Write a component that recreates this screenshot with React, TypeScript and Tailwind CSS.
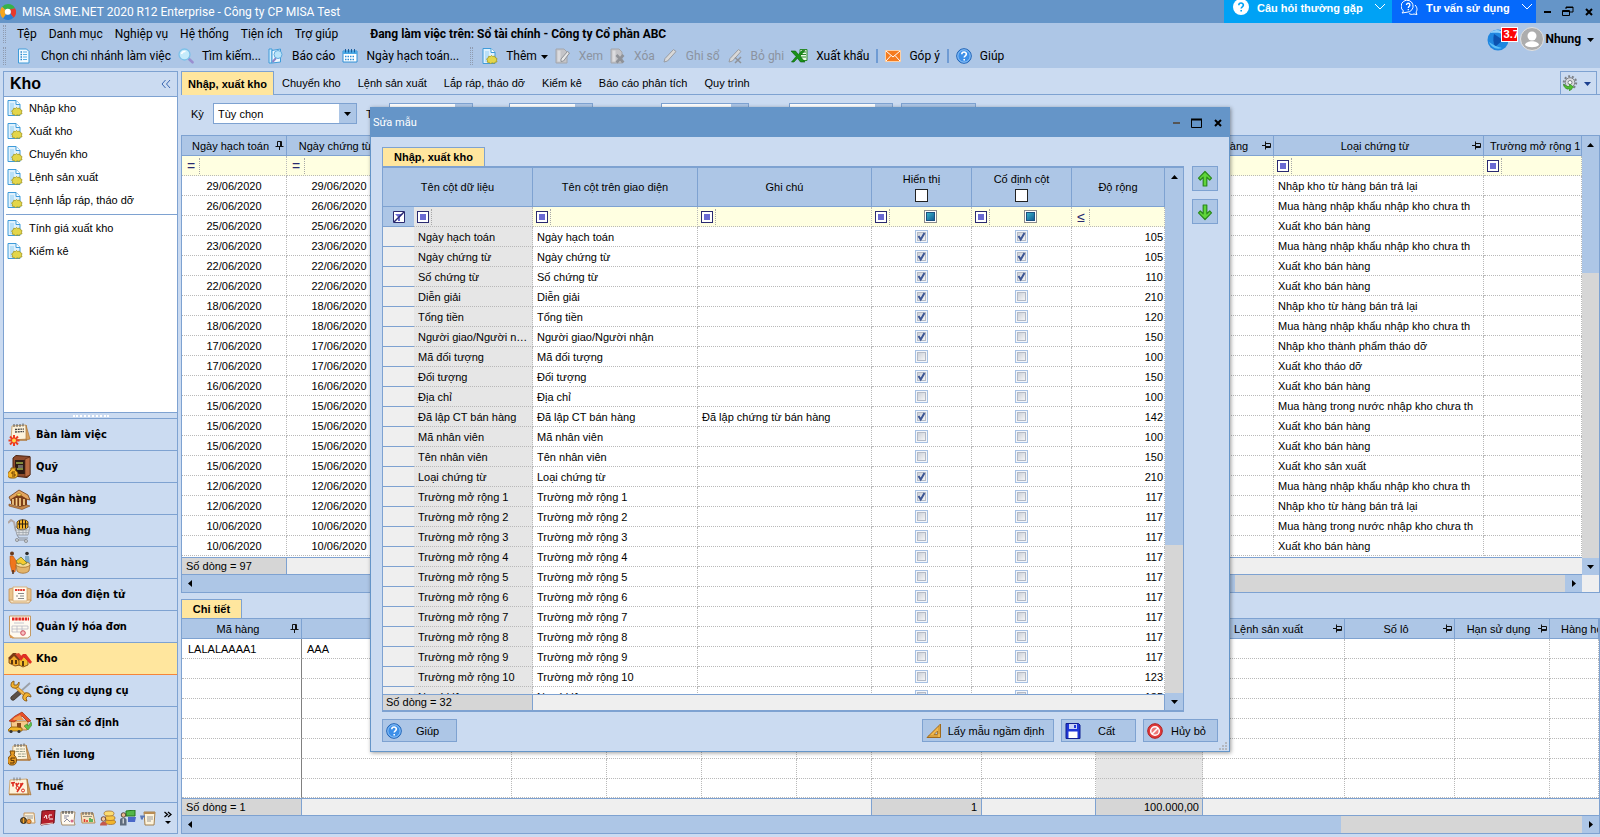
import type { ReactNode } from "react";

const ui = "font-['Roboto','Liberation_Sans',sans-serif]";

const menus = ["Tệp", "Danh mục", "Nghiệp vụ", "Hệ thống", "Tiện ích", "Trợ giúp"];
const tabs = ["Chuyển kho", "Lệnh sản xuất", "Lắp ráp, tháo dỡ", "Kiểm kê", "Báo cáo phân tích", "Quy trình"];
const links = ["Nhập kho", "Xuất kho", "Chuyển kho", "Lệnh sản xuất", "Lệnh lắp ráp, tháo dỡ"];
const extraLinks = ["Tính giá xuất kho", "Kiểm kê"];

const vouchers: [string, string][] = [
  ["29/06/2020", "Nhập kho từ hàng bán trả lại"],
  ["26/06/2020", "Mua hàng nhập khẩu nhập kho chưa th"],
  ["25/06/2020", "Xuất kho bán hàng"],
  ["23/06/2020", "Mua hàng nhập khẩu nhập kho chưa th"],
  ["22/06/2020", "Xuất kho bán hàng"],
  ["22/06/2020", "Xuất kho bán hàng"],
  ["18/06/2020", "Nhập kho từ hàng bán trả lại"],
  ["18/06/2020", "Mua hàng nhập khẩu nhập kho chưa th"],
  ["17/06/2020", "Nhập kho thành phẩm tháo dỡ"],
  ["17/06/2020", "Xuất kho tháo dỡ"],
  ["16/06/2020", "Xuất kho bán hàng"],
  ["15/06/2020", "Mua hàng trong nước nhập kho chưa th"],
  ["15/06/2020", "Xuất kho bán hàng"],
  ["15/06/2020", "Xuất kho bán hàng"],
  ["15/06/2020", "Xuất kho sản xuất"],
  ["12/06/2020", "Mua hàng nhập khẩu nhập kho chưa th"],
  ["12/06/2020", "Nhập kho từ hàng bán trả lại"],
  ["10/06/2020", "Mua hàng trong nước nhập kho chưa th"],
  ["10/06/2020", "Xuất kho bán hàng"],
];

type Field = { name: string; note?: string; show?: boolean; fixed?: boolean; width: number };

const fields: Field[] = [
  { name: "Ngày hạch toán", show: true, fixed: true, width: 105 },
  { name: "Ngày chứng từ", show: true, fixed: true, width: 105 },
  { name: "Số chứng từ", show: true, fixed: true, width: 110 },
  { name: "Diễn giải", show: true, width: 210 },
  { name: "Tổng tiền", show: true, width: 120 },
  { name: "Người giao/Người nhận", show: true, width: 150 },
  { name: "Mã đối tượng", width: 100 },
  { name: "Đối tượng", show: true, width: 150 },
  { name: "Địa chỉ", width: 100 },
  { name: "Đã lập CT bán hàng", note: "Đã lập chứng từ bán hàng", show: true, width: 142 },
  { name: "Mã nhân viên", width: 100 },
  { name: "Tên nhân viên", width: 150 },
  { name: "Loại chứng từ", show: true, width: 210 },
  { name: "Trường mở rộng 1", show: true, width: 117 },
  { name: "Trường mở rộng 2", width: 117 },
  { name: "Trường mở rộng 3", width: 117 },
  { name: "Trường mở rộng 4", width: 117 },
  { name: "Trường mở rộng 5", width: 117 },
  { name: "Trường mở rộng 6", width: 117 },
  { name: "Trường mở rộng 7", width: 117 },
  { name: "Trường mở rộng 8", width: 117 },
  { name: "Trường mở rộng 9", width: 117 },
  { name: "Trường mở rộng 10", width: 123 },
  { name: "Người lập", width: 135 },
];

/* ---------- icons ---------- */

function Logo() {
  return (
    <svg width="16" height="16" viewBox="0 0 16 16" className="shrink-0">
      <path d="M8 0a8 8 0 0 1 7 4.2L9.6 5.4A3 3 0 0 0 5.500 6L2 2.800A8 8 0 0 1 8 0z" fill="#35b34a" />
      <path d="M15 4.200A8 8 0 0 1 13.500 13.800L10.500 9.800A3 3 0 0 0 9.600 5.400z" fill="#e8392c" />
      <path d="M13.500 13.800A8 8 0 0 1 3 14.200L6 10.200a3 3 0 0 0 4.500-.4z" fill="#2d7dd2" />
      <path d="M3 14.200A8 8 0 0 1 2 2.800L5.500 6A3 3 0 0 0 6 10.200z" fill="#f7a51c" />
      <circle cx="7.800" cy="7.800" r="3" fill="#fff" />
    </svg>
  );
}

function DocIcon() {
  return (
    <svg width="16" height="16" viewBox="0 0 16 16" className="shrink-0">
      <path d="M1 .5h8l4 4v11H1z" fill="#dff1fd" stroke="#3f9bd9" />
      <path d="M3 14V3h4v11z" fill="#b9e0f8" />
      <path d="M9 .5v4h4" fill="#fff" stroke="#3f9bd9" />
      <path d="M9.500 7.500l1.200 1 1.800-.4.800 1.500 1.700.9-.5 1.700.5 1.600-1.700.4-1.300 1.200-1.700-.6-1.800.9-1.300-1.200-1.900-.3.200-1.700-.9-1.600 1.600-1 .5-1.600 1.700.2z" fill="#e3d64a" stroke="#a09420" strokeWidth=".8" />
    </svg>
  );
}

function ListIcon() {
  return (
    <svg width="16" height="16" viewBox="0 0 16 16" className="shrink-0">
      <path d="M1.500 1h8l2.500 2.500V15H1.500z" fill="#f3faff" stroke="#3f9bd9" />
      <path d="M3.500 4h1.500M3.500 6.500h1.500M3.500 9h1.500M3.500 11.500h1.500" stroke="#2b86c9" strokeWidth="1.400" />
      <path d="M6 4h4M6 6.500h4M6 9h4M6 11.500h4" stroke="#5aaee3" />
    </svg>
  );
}

function SearchIcon() {
  return (
    <svg width="16" height="16" viewBox="0 0 16 16" className="shrink-0">
      <path d="M10.500 10.500l4 3.800" stroke="#9a8fd0" strokeWidth="2.600" strokeLinecap="round" />
      <circle cx="6.500" cy="6.500" r="5.500" fill="#c5ebfb" stroke="#7cc0e8" strokeWidth="1.300" />
      <path d="M3.500 6a3.500 3.500 0 0 1 4-2.500" stroke="#fff" strokeWidth="1.500" fill="none" />
    </svg>
  );
}

function ReportIcon() {
  return (
    <svg width="16" height="16" viewBox="0 0 16 16" className="shrink-0">
      <path d="M1 1h3v14H1z" fill="#d3edfc" stroke="#3f9bd9" />
      <path d="M4 2.500l8.500-1.500v13L4 15z" fill="#f1f9ff" stroke="#3f9bd9" />
      <path d="M8 10l-3.500 4" stroke="#8d86c9" strokeWidth="2" />
      <circle cx="10" cy="6.500" r="4" fill="#b9e4fa" stroke="#5fa9dd" />
    </svg>
  );
}

function CalendarIcon() {
  return (
    <svg width="16" height="16" viewBox="0 0 16 16" className="shrink-0">
      <path d="M1 3h14v11H1z" fill="#fff" stroke="#2f8fd6" />
      <path d="M1 3h14v3H1z" fill="#4aa9e6" />
      <path d="M3.500 1v3.500M6.500 1v3.500M9.500 1v3.500M12.500 1v3.500" stroke="#1a5f9c" />
      <path d="M3 8.500h10M3 11.500h10" stroke="#2f8fd6" strokeWidth="1.500" strokeDasharray="1.500 1" />
    </svg>
  );
}

function GrayDocIcon({ mark }: { mark: "pen" | "x" }) {
  return (
    <svg width="16" height="16" viewBox="0 0 16 16" className="shrink-0">
      <path d="M1 1h8l3 3v11H1z" fill="#c4c4c8" stroke="#a3a6ac" />
      <path d="M2.500 2.500h3v11h-3z" fill="#dcdcdf" />
      {mark === "pen" ? (
        <path d="M6 11l6.500-7.500 2 1.500L8.500 13l-2.500.5z" fill="#e8e8e8" stroke="#8f9298" />
      ) : (
        <path d="M6.500 7l7 7.500M13.500 7l-7 7.500" stroke="#8f9298" strokeWidth="2.600" />
      )}
    </svg>
  );
}

function PencilIcon({ crossed }: { crossed?: boolean }) {
  return (
    <svg width="16" height="16" viewBox="0 0 16 16" className="shrink-0">
      <path d="M2 14l1-3.500L11.500 1.500l2.500 2L5.500 13z" fill="#d9d9d9" stroke="#999ca2" />
      {crossed && <path d="M8 9.500l6 5.500M14 9l-6 6" stroke="#8f9298" strokeWidth="1.500" />}
    </svg>
  );
}

function ExcelIcon() {
  return (
    <svg width="17" height="16" viewBox="0 0 17 16" className="shrink-0">
      <path d="M9 1.500h7v11H9z" fill="#eafbe6" stroke="#2b8a2b" />
      <path d="M10 4h5M10 6.500h5M10 9h5" stroke="#2b8a2b" />
      <path d="M0 3h4.500l2.800 3.500L11 2.500h3L9 8l5 6H9.500L6.500 10.200 3 14H.5l4.600-5.500z" fill="#189318" stroke="#0a5c0a" strokeWidth=".6" />
    </svg>
  );
}

function MailIcon() {
  return (
    <svg width="16" height="16" viewBox="0 0 16 16" className="shrink-0">
      <path d="M.5 2.500h15v11H.5z" fill="#f57c1f" stroke="#fbd0a8" />
      <path d="M1 3l7 6 7-6M1 13l5-5.500M15 13l-5-5.500" stroke="#fff" fill="none" />
    </svg>
  );
}

function HelpIcon() {
  return (
    <svg width="16" height="16" viewBox="0 0 16 16" className="shrink-0">
      <circle cx="8" cy="8" r="7.300" fill="#3d8fe8" stroke="#1f62b4" />
      <circle cx="8" cy="8" r="6.200" fill="none" stroke="#a9d2fa" strokeWidth=".8" />
      <path d="M5.800 6.300c0-3 4.600-2.900 4.600-.2 0 1.700-2.200 1.700-2.200 3.400M8.200 11v1.500" stroke="#fff" strokeWidth="1.600" fill="none" />
    </svg>
  );
}

function RulerIcon() {
  return (
    <svg width="16" height="16" viewBox="0 0 16 16" className="shrink-0">
      <path d="M14.500 1v13.500H1z" fill="#f2b84b" stroke="#a06a1c" />
      <path d="M11.500 8v3.500H8z" fill="#adc6e6" stroke="#a06a1c" strokeWidth=".8" />
      <path d="M3 13.500v-1M5 13.500v-1M7 13.500v-1M9 13.500v-1M11 13.500v-1M13.500 4h-1M13.500 6h-1M13.500 8h-1M13.500 10h-1" stroke="#7d4d0e" strokeWidth=".8" />
    </svg>
  );
}

function SaveIcon() {
  return (
    <svg width="16" height="16" viewBox="0 0 16 16" className="shrink-0">
      <path d="M1 .5h12.500L15 2v13.500H1z" fill="#2038d8" stroke="#101f8f" />
      <path d="M4 1h8v5H4z" fill="#c9d3f5" />
      <path d="M9 2h2v3H9z" fill="#2038d8" />
      <path d="M3.500 8.500h9V15h-9z" fill="#fff" />
    </svg>
  );
}

function CancelIcon() {
  return (
    <svg width="16" height="16" viewBox="0 0 16 16" className="shrink-0">
      <circle cx="8" cy="8" r="7.300" fill="#e23a3a" stroke="#b01f1f" />
      <circle cx="8" cy="8" r="4.300" fill="#e77" stroke="#fff" strokeWidth="1.500" />
      <path d="M5 11l6-6" stroke="#fff" strokeWidth="1.600" />
    </svg>
  );
}

function GreenArrow({ down }: { down?: boolean }) {
  return (
    <svg width="16" height="18" viewBox="0 0 16 18" className={down ? "rotate-180" : ""}>
      <path d="M8 1.500l6.500 6.700-1.800 1.800L9.800 7.200V16H6.200V7.200L3.300 10 1.500 8.200z" fill="#5fd53a" stroke="#2a8a1a" strokeWidth="1.200" strokeLinejoin="round" />
    </svg>
  );
}

function GearIcon() {
  return (
    <svg width="16" height="16" viewBox="0 0 16 16">
      <circle cx="8" cy="7.500" r="6.200" fill="none" stroke="#7b7f85" strokeWidth="2" strokeDasharray="2 1.800" />
      <circle cx="8" cy="7.500" r="4.800" fill="#d9dbde" stroke="#7b7f85" />
      <circle cx="8" cy="7.500" r="2" fill="#fff" stroke="#7b7f85" />
      <path d="M1.500 9c.5 4 3 5.500 6 4.800V16l4-4-4-3v2.500c-2 .3-4-.5-6-2.500z" fill="#4fc02f" stroke="#2c8a1a" strokeWidth=".6" />
    </svg>
  );
}

function PinIcon({ pinned }: { pinned?: boolean }) {
  return (
    <svg width="9" height="9" viewBox="0 0 9 9" className={pinned ? "shrink-0" : "shrink-0 rotate-90"}>
      <path d="M2.500 5V.5h4V5M5.500 1v4M.5 5.500h8M4.500 6v3" stroke="#111" fill="none" />
    </svg>
  );
}

function FilterOffIcon() {
  return (
    <svg width="12" height="12" viewBox="0 0 12 12" className="mx-auto">
      <path d="M.5.5h11v11H.5z" fill="#fff" stroke="#2a2a70" />
      <path d="M2 3h8L7 6v4H5V6z" fill="#6a6ad2" />
      <path d="M11 1L1 11" stroke="#2a2a70" strokeWidth="1.500" />
    </svg>
  );
}

function Arrow({ dir, className = "" }: { dir: "up" | "down" | "left" | "right"; className?: string }) {
  const d = { up: "M0 5h7L3.500 1z", down: "M0 2h7L3.500 6z", left: "M5 0v7L1 3.500z", right: "M2 0v7l4-3.500z" }[dir];
  return (
    <svg width="7" height="7" viewBox="0 0 7 7" className={`shrink-0 ${className}`} fill="currentColor">
      <path d={d} />
    </svg>
  );
}

const navIcons: Record<string, ReactNode> = {
  desk: (
    <>
      <path d="M4 3l14-1 1 14-16 1z" fill="#fdf3dc" stroke="#d0ab78" />
      <path d="M18 2l4 14-4 1z" fill="#d9a25e" stroke="#a06a2c" strokeWidth=".6" />
      <path d="M3 17h16" stroke="#b07a3c" strokeWidth="1.500" />
      <path d="M6 1v3M9 1v3M12 1v3M15 .5v3" stroke="#555" />
      <path d="M7 6.500l9-.5M7 9l9-.5" stroke="#444" strokeWidth="1.300" strokeDasharray="2 .7" />
      <path d="M6 12v11M.5 17.500h11M2 13.500l8 8M10 13.500l-8 8" stroke="#ee3b1f" strokeWidth="2" />
      <circle cx="6" cy="17.500" r="2" fill="#ffd54a" />
    </>
  ),
  safe: (
    <>
      <path d="M5 3l3-2.500 14 1V20l-3 2.500L5 21z" fill="#8e4b2c" stroke="#4d2412" />
      <path d="M7 5h10v14H7z" fill="#2c1a14" />
      <path d="M8 8h7M9 14h6" stroke="#9fb24a" strokeWidth="1.500" />
      <path d="M10 10h5v3h-5z" fill="#6f6a66" />
      <path d="M17 4l5-2v18l-5 2z" fill="#b96b42" stroke="#5c2b16" strokeWidth=".7" />
      <path d="M3 13h5l-1 2c5 3 3 8-1 8H3c-4 0-5-5 0-8z" fill="#f5b32a" stroke="#8b5a0b" />
      <path d="M7 17H4v2h3v2H4" stroke="#6b3d00" fill="none" />
    </>
  ),
  bank: (
    <>
      <path d="M1 10L11 3l9 5 2 5-4-1-7-4-8 6z" fill="#e3a55e" stroke="#6e3a14" strokeWidth=".8" />
      <path d="M3 12l8-5 8 5v6l-7 2-9-3z" fill="#7b3d18" />
      <path d="M5 12v6M8.500 11v8M12 11v8M16 12v6" stroke="#f6cf8a" strokeWidth="1.700" />
      <path d="M1 17l10 3 8-2 3 1-8 3.500L1 19z" fill="#c88a4a" stroke="#7b4216" strokeWidth=".6" />
      <path d="M8 8l3-2 3 2-3 1z" fill="#f7dc60" stroke="#8a5a12" strokeWidth=".5" />
    </>
  ),
  cart: (
    <>
      <path d="M0 4l3-3 3 2 2 9" fill="none" stroke="#b2a6a2" strokeWidth="2" />
      <path d="M7 8h15l-2 8-11 0z" fill="#dfe2e5" stroke="#8b9098" strokeWidth=".8" />
      <path d="M9 3c2-3 10-3 11 0v5c-1 3-9 4-11 1z" fill="#f4b429" stroke="#4a2f0b" strokeWidth=".8" />
      <path d="M14.500 .5v9M11.500 1.500v8M17.500 1.500v8M10 5h10" stroke="#2d2010" fill="none" />
      <path d="M8 11h13M9 13.500h11M11 9v7M15 9v7M18 9v7" stroke="#9aa0a8" strokeWidth=".7" />
      <path d="M9 16l2 3h9M8 21h10" stroke="#8b9098" fill="none" />
      <circle cx="9" cy="21" r="1.600" fill="#c4c8cd" stroke="#777" strokeWidth=".6" />
      <circle cx="18" cy="22" r="1.600" fill="#c4c8cd" stroke="#777" strokeWidth=".6" />
    </>
  ),
  sell: (
    <>
      <circle cx="4" cy="2.500" r="2" fill="#6a3a1c" />
      <path d="M2 5h3l4 6-2 10H4L2 13z" fill="#f0761d" stroke="#a8480c" strokeWidth=".5" />
      <path d="M5 19v4" stroke="#4a2a1a" strokeWidth="1.500" />
      <circle cx="19" cy="2.500" r="1.800" fill="#2b2b2b" />
      <path d="M17 5h4l1 8h-5z" fill="#7fa9c8" />
      <path d="M8 14h14l-1 6c-3 3-9 3-12 0z" fill="#e3b46a" stroke="#9c6420" strokeWidth=".7" />
      <ellipse cx="15" cy="13.500" rx="7" ry="2.800" fill="#f7dc98" stroke="#9c6420" strokeWidth=".7" />
      <path d="M8 10l5-4 6 6-4 2-3-2-2 1z" fill="#f6cb2f" stroke="#6a7a2c" strokeWidth=".8" />
    </>
  ),
  einvoice: (
    <>
      <path d="M1 6l4-1v13H1zM23 6l-4-1v13h4z" fill="#e9c38b" stroke="#c49358" strokeWidth=".8" />
      <path d="M1 17h22l-2 3H3z" fill="#f7e3c0" stroke="#c49358" strokeWidth=".8" />
      <path d="M5 4h14v14H5z" fill="#fffaf0" stroke="#d8b27c" />
      <path d="M7 7h10" stroke="#e0392c" strokeWidth="1.800" strokeDasharray="2 .6" />
      <path d="M10 10.500h6M8 13h2M12 13h4M10 15.500h6" stroke="#8a8a8a" />
    </>
  ),
  invoice: (
    <>
      <path d="M1.500 1h21v20l-3 2H4l-2.500-3z" fill="#fffaf0" stroke="#c49a62" />
      <path d="M4 4h17" stroke="#e0251c" strokeWidth="3" strokeDasharray="2.500 .7" />
      <path d="M6 8h10M4 11h16M4 14h16M4 17h10M4 11v6M9 11v6M14 11v6M20 11v3" stroke="#b9b9c4" strokeWidth=".8" />
      <circle cx="15" cy="18" r="2.300" fill="#f6c0c0" stroke="#d14a5a" />
      <path d="M1.500 19l5 4H2z" fill="#d99b57" />
    </>
  ),
  store: (
    <>
      <path d="M1 12l5-5 6 5v6l-5 1-6-3z" fill="#f0a92a" stroke="#6e3a0c" strokeWidth=".8" />
      <path d="M0 11l5-5h3l6 8-2 1-6-6-4 4z" fill="#7a3a14" />
      <path d="M7 7l4-1 5 6-2 3z" fill="#d8452a" />
      <path d="M11 13l4-4 5 5v4l-5 2-4-2z" fill="#f4bf2e" stroke="#6e3a0c" strokeWidth=".8" />
      <path d="M11 11l4-4h3l6 8-2 2-6-7-3 4z" fill="#e02f24" />
      <path d="M4 13v4M8 13v4M15 14v5" stroke="#4a2a0a" strokeWidth="1.800" />
    </>
  ),
  tools: (
    <>
      <path d="M22 4L12 13" stroke="#9aa0a8" strokeWidth="1.800" />
      <path d="M11 11l3 3-8 7c-2 1-4-1-3-3z" fill="#5b5048" stroke="#2d2116" strokeWidth=".7" />
      <path d="M7 7l11 10" stroke="#d99428" strokeWidth="3.400" />
      <path d="M7 7l11 10" stroke="#f7c45c" strokeWidth="1.200" />
      <path d="M4 3l2-1v4h3l2-3c1 4-2 7-5 6-3 0-4-3-2-6z" fill="#f2b230" stroke="#7a4b0b" strokeWidth=".8" />
      <path d="M15 17l2-3c3-1 6 1 6 4l-3-1-2 2 1 3c-3 0-5-2-4-5z" fill="#f2b230" stroke="#7a4b0b" strokeWidth=".8" />
    </>
  ),
  asset: (
    <>
      <path d="M3 10h17l-1 9H4z" fill="#f7c98a" stroke="#a15e13" strokeWidth=".7" />
      <path d="M1 10L7 5l7-4 9 9-3 1-6-6-8 6z" fill="#e8502a" stroke="#9b2d10" strokeWidth=".7" />
      <path d="M6 7l6-3 4 5H5z" fill="#f39a4a" />
      <path d="M9 12h4v6H9z" fill="#8b4a1e" />
      <path d="M16 15l3-2 1 2 3-4 1 3-4 5z" fill="#5cc04a" stroke="#3d7a1c" strokeWidth=".5" />
      <path d="M0 19l3-3h6l5 1v3H0z" fill="#f1b52a" stroke="#8b5a0b" strokeWidth=".8" />
      <circle cx="3" cy="20.500" r="1.600" fill="#333" />
      <circle cx="11" cy="20.500" r="1.600" fill="#333" />
    </>
  ),
  salary: (
    <>
      <path d="M5 3l13-1 2 14-16 1z" fill="#fdf3dc" stroke="#d0ab78" />
      <path d="M18 2l5 15-3 0z" fill="#d9a25e" stroke="#a06a2c" strokeWidth=".6" />
      <path d="M4 17h18" stroke="#b07a3c" strokeWidth="1.500" />
      <path d="M7 1v3M10 1v3M13 1v3M16 .5v3" stroke="#555" />
      <path d="M8 6h9M8 8.500h9M10 11h8M10 13.500h8" stroke="#9aa08a" strokeWidth="1.200" strokeDasharray="3 .7" />
      <path d="M2 8h5l-1 4c4 3 3 10-1 10H3c-4 0-5-7 0-10z" fill="#e59a24" stroke="#7a4b0b" />
      <path d="M7 15H3v2.500h3V20H2" stroke="#5a3000" fill="none" />
    </>
  ),
  tax: (
    <>
      <path d="M2 5l17-1 1 15H1z" fill="#fdf3dc" stroke="#d0ab78" />
      <path d="M19 4l4 16-3-1z" fill="#d9a25e" stroke="#a06a2c" strokeWidth=".6" />
      <path d="M1 19.500h20" stroke="#b07a3c" strokeWidth="1.500" />
      <path d="M6 2.500v3M9 2.500v3M12 2.500v3" stroke="#777" />
      <path d="M3 8l4-.5M5 8v3.500M8 8l1 3.500M11 8l-2 2M13 8v3" stroke="#dd2a1f" strokeWidth="1.600" />
      <path d="M15 8l-6 9" stroke="#dd2a1f" strokeWidth="1.500" />
      <circle cx="9.500" cy="13" r="1.500" fill="none" stroke="#dd2a1f" />
      <circle cx="15" cy="15.500" r="1.500" fill="none" stroke="#dd2a1f" />
    </>
  ),
};

const modules: [string, string][] = [
  ["desk", "Bàn làm việc"],
  ["safe", "Quỹ"],
  ["bank", "Ngân hàng"],
  ["cart", "Mua hàng"],
  ["sell", "Bán hàng"],
  ["einvoice", "Hóa đơn điện tử"],
  ["invoice", "Quản lý hóa đơn"],
  ["store", "Kho"],
  ["tools", "Công cụ dụng cụ"],
  ["asset", "Tài sản cố định"],
  ["salary", "Tiền lương"],
  ["tax", "Thuế"],
];

const smallIcons: ReactNode[] = [
  <>
    <path d="M4 3h10l1 10H4z" fill="#fdf3dc" stroke="#c49358" />
    <path d="M5 6h8M7 8h6" stroke="#999" />
    <circle cx="3.500" cy="10.500" r="3" fill="#f5a52a" stroke="#222" />
    <path d="M2 8v5M5 8v5" stroke="#222" />
    <circle cx="9" cy="11.500" r="2.200" fill="#f5933a" stroke="#7a4b0b" strokeWidth=".6" />
  </>,
  <>
    <path d="M2 1l13-1-1 13-13 2z" fill="#b5202c" stroke="#6d0d16" />
    <path d="M1 14.500l12-1.500" stroke="#f3d6c8" strokeWidth="1.200" />
    <path d="M4 8l2-3 1 4M9 8V5h3M9 9h4" stroke="#fff" fill="none" />
  </>,
  <>
    <path d="M1 2h14l-1 9 1 4H2l-1-4z" fill="#fffaf0" stroke="#a88e6a" />
    <path d="M3 1v3M6 1v3M9 1v3M12 1v3" stroke="#333" />
    <path d="M4 6h5M4 8h3M4 12l3-3 3 3" stroke="#8a8aa0" fill="none" />
    <circle cx="12" cy="11" r="1.500" fill="#d46a8a" />
  </>,
  <>
    <path d="M1 3h12l2 10H2z" fill="#f6e3c0" stroke="#b88b52" />
    <path d="M3 2v3M6 2v3M9 2v3M12 2v3" stroke="#555" />
    <path d="M3 6.500h9" stroke="#9a8f80" />
    <path d="M4.500 12V9M7 12v-2" stroke="#e0392c" strokeWidth="1.600" />
    <path d="M10 12V8M12 12v-3" stroke="#3aa648" strokeWidth="1.600" />
  </>,
  <>
    <ellipse cx="10.500" cy="12" rx="5" ry="2.500" fill="#f2b42c" stroke="#9c6420" strokeWidth=".7" />
    <ellipse cx="10" cy="8" rx="5" ry="2.500" fill="#f7c848" stroke="#9c6420" strokeWidth=".7" />
    <ellipse cx="9" cy="3.500" rx="5" ry="2.500" fill="#fbdc72" stroke="#9c6420" strokeWidth=".7" />
    <circle cx="3.500" cy="9" r="2.300" fill="#f4c9a0" stroke="#5a2c1c" strokeWidth=".8" />
    <path d="M0 15.500c0-5 7-5 7 0z" fill="#c4584c" />
  </>,
  <>
    <path d="M6 1l9-1v6H6z" fill="#52b648" stroke="#22751f" />
    <path d="M8 7h8l-1 5H8z" fill="#4a68c8" />
    <circle cx="3.500" cy="5" r="2.300" fill="#e8b890" stroke="#3a2a1a" strokeWidth=".8" />
    <path d="M0 15.500V10c0-3 6.500-3 6.500 0v5.500z" fill="#5f6c7c" />
    <path d="M3.200 8.500v5" stroke="#fff" />
  </>,
  <>
    <path d="M4 2h11l-1 13H5z" fill="#fdf3dc" stroke="#a5804c" />
    <path d="M4 2h11v2H4z" fill="#b98c52" />
    <path d="M7 7h6M7 9h6M7 11h4" stroke="#999" />
    <path d="M0 5.500h5v2H3v2H1z" fill="#5a78b8" />
  </>,
];

/* ---------- shared pieces ---------- */

function FilterOp({ op = "box" }: { op?: "box" | "=" | "≤" }) {
  return (
    <button type="button" aria-label="Điều kiện lọc" className="flex h-4 w-4 shrink-0 items-center justify-center text-[#2a2a70]">
      {op === "box" ? (
        <span className="flex size-3 items-center justify-center border border-[#2a2a70] bg-white">
          <span className="size-[6px] bg-[#6a6ad2]" />
        </span>
      ) : (
        <span className="text-[14px] leading-none">{op}</span>
      )}
    </button>
  );
}

function FilterCell({ op, label, tick, className = "bg-[#ffffe1]" }: { op?: "box" | "=" | "≤"; label: string; tick?: boolean; className?: string }) {
  return (
    <td className={`border-r border-b border-dotted border-[#b9b9b9] p-0 ${className}`}>
      <div className="flex h-[19px] items-center pl-px">
        <FilterOp op={op} />
        <span className="h-4 border-l border-dotted border-[#a8a8a8]" />
        {tick ? (
          <span className="flex flex-1 justify-center">
            <span className="flex size-[13px] items-center justify-center border border-[#8a8a8a] bg-white">
              <span className="size-[9px] border border-[#1c5180] bg-linear-to-br from-[#3bb3c9] to-[#155e94]" />
            </span>
          </span>
        ) : (
          <input aria-label={label} className="w-0 flex-1 bg-transparent outline-none" />
        )}
      </div>
    </td>
  );
}

function Tick({ on, label }: { on?: boolean; label: string }) {
  return (
    <span className="inline-grid size-[13px] align-middle">
      <input
        type="checkbox"
        defaultChecked={on}
        aria-label={label}
        className="col-start-1 row-start-1 size-[13px] appearance-none border border-[#a6c0e2] bg-linear-to-br from-[#c3c8d0] to-white shadow-[inset_0_0_0_1px_#f4f6fa,inset_0_0_0_2px_#b4bac6]"
      />
      {on && (
        <svg viewBox="0 0 13 13" className="pointer-events-none col-start-1 row-start-1 size-[13px]">
          <path d="M3.500 6l2.200 3.500L9.500 3" fill="none" stroke="#3d5796" strokeWidth="2" />
        </svg>
      )}
    </span>
  );
}

const dotted = "border-r border-b border-dotted border-[#b9b9b9]";
const th = "border-r border-b border-[#7ea2d1] bg-[#adc6e6] p-0 font-normal";

function HeadCell({ label, pin }: { label?: string; pin?: "on" | "off" }) {
  return (
    <th className={th}>
      <div className="flex items-center overflow-hidden pr-[2px] pl-1 whitespace-nowrap">
        <span className="flex-1 text-center">{label}</span>
        {pin && <PinIcon pinned={pin === "on"} />}
      </div>
    </th>
  );
}

function ToolButton({ icon, children, off }: { icon: ReactNode; children: ReactNode; off?: boolean }) {
  return (
    <button type="button" disabled={off} className="flex items-center gap-2 whitespace-nowrap disabled:text-[#8b93a0]">
      {icon}
      {children}
    </button>
  );
}

function DialogButton({ icon, children, wide }: { icon: ReactNode; children: ReactNode; wide?: boolean }) {
  return (
    <button type="button" className={`flex h-[23px] items-center border border-[#7ea2d1] bg-[#adc6e6] px-[3px] ${wide ? "w-[132px]" : "w-[75px]"}`}>
      {icon}
      <span className="flex-1 text-center">{children}</span>
    </button>
  );
}

function Grip() {
  return <span className="h-[18px] w-[3px] border-x border-dotted border-[#8f9bb0]" />;
}

/* ---------- page sections ---------- */

function TitleBar() {
  return (
    <div className="flex h-[23px] items-center overflow-hidden bg-[#6595c8] text-white">
      <Logo />
      <span className={`ml-[6px] flex-1 text-[12px] ${ui}`}>MISA SME.NET 2020 R12 Enterprise - Công ty CP MISA Test</span>
      <button type="button" className="flex h-full w-[168px] items-start gap-2 bg-[#00a2f5] pl-[9px] font-bold">
        <svg width="16" height="16" viewBox="0 0 16 16">
          <circle cx="8" cy="7" r="8" fill="#fff" />
          <path d="M5.800 5.300c0-3 4.600-2.900 4.600-.2 0 1.700-2.200 1.700-2.200 3.400M8.200 10v1.500" stroke="#00a2f5" strokeWidth="1.600" fill="none" />
        </svg>
        <span className="leading-[16px]">Câu hỏi thường gặp</span>
        <svg width="10" height="16" viewBox="0 0 10 16" className="ml-1" fill="none" stroke="#fff">
          <path d="M0 4l5 5 5-5" />
        </svg>
      </button>
      <button type="button" className="flex h-full w-[144px] items-start gap-2 bg-[#0569fb] pl-[9px] font-bold">
        <svg width="17" height="16" viewBox="0 0 17 16" fill="none" stroke="#fff">
          <path d="M2.500 11A6 6 0 1 1 6 12.200L1 13zM14 5c3 3 2 6 1 7l1 2.500-3-.5c-2 .8-4 .3-5-.6" />
          <path d="M5.500 5c0-2.400 3.400-2.200 3.400-.1C8.900 6.200 7.300 6.300 7.300 8M7.300 9v1.200" strokeWidth="1.300" />
        </svg>
        <span className="leading-[16px]">Tư vấn sử dụng</span>
        <svg width="10" height="16" viewBox="0 0 10 16" className="ml-1" fill="none" stroke="#fff">
          <path d="M0 4l5 5 5-5" />
        </svg>
      </button>
      <div className="flex items-center gap-[10px] pr-[6px] pl-2">
        <button type="button" aria-label="Thu nhỏ">
          <svg width="8" height="10" viewBox="0 0 8 10"><path d="M0 5h7" stroke="#000" strokeWidth="2" /></svg>
        </button>
        <button type="button" aria-label="Khôi phục">
          <svg width="12" height="11" viewBox="0 0 12 11" fill="none" stroke="#000"><path d="M4 3V1h7v5H8M.5 4.500h7v5h-7zM.5 5.500h7M4 1.500h7" /></svg>
        </button>
        <button type="button" aria-label="Đóng">
          <svg width="10" height="10" viewBox="0 0 10 10"><path d="M2 2l6 6M8 2L2 8" stroke="#000" strokeWidth="2" /></svg>
        </button>
      </div>
    </div>
  );
}

function TopBars() {
  return (
    <div className={`flex h-[45px] bg-[#adc6e6] text-[12px] ${ui}`}>
      <div className="flex-1">
        <div className="flex h-[22px] items-center pl-[3px]">
          <Grip />
          <nav className="flex gap-3 pl-[11px]">
            {menus.map((m) => (
              <button key={m} type="button" className="whitespace-nowrap">{m}</button>
            ))}
          </nav>
          <span className="pl-8 font-bold whitespace-nowrap">Đang làm việc trên: Sổ tài chính - Công ty Cổ phần ABC</span>
        </div>
        <div className="flex h-[22px] items-center pl-[3px]">
          <Grip />
          <div className="flex items-center gap-[7px] px-[11px]">
            <ToolButton icon={<ListIcon />}>Chọn chi nhánh làm việc</ToolButton>
            <ToolButton icon={<SearchIcon />}>Tìm kiếm...</ToolButton>
            <ToolButton icon={<ReportIcon />}>Báo cáo</ToolButton>
            <ToolButton icon={<CalendarIcon />}>Ngày hạch toán...</ToolButton>
          </div>
          <Grip />
          <div className="flex items-center gap-[7px] pl-[9px]">
            <ToolButton icon={<DocIcon />}>
              <span className="flex items-center gap-1">
                Thêm
                <Arrow dir="down" />
              </span>
            </ToolButton>
            <ToolButton off icon={<GrayDocIcon mark="pen" />}>Xem</ToolButton>
            <ToolButton off icon={<GrayDocIcon mark="x" />}>Xóa</ToolButton>
            <ToolButton off icon={<PencilIcon />}>Ghi sổ</ToolButton>
            <ToolButton off icon={<PencilIcon crossed />}>Bỏ ghi</ToolButton>
            <ToolButton icon={<ExcelIcon />}>Xuất khẩu</ToolButton>
            <span className="h-[14px] w-[2px] bg-[#6f9bd3]" />
            <ToolButton icon={<MailIcon />}>Góp ý</ToolButton>
            <span className="h-[14px] w-[2px] bg-[#6f9bd3]" />
            <ToolButton icon={<HelpIcon />}>Giúp</ToolButton>
          </div>
        </div>
      </div>
      <div className="flex h-8 items-center gap-[2px] pr-[6px]">
        <div className="relative mr-[7px] h-6 w-6">
          <svg width="22" height="24" viewBox="0 -2 22 24">
            <circle cx="11" cy="11" r="10.500" fill="#1f86e0" />
            <path d="M3 4c5-5 12-3 14 2-4-3-9-2-14-2z" fill="#8fd0fb" />
            <path d="M7 5l9 6-8 7c-2-4-2-9-1-13z" fill="#0b52b0" />
            <path d="M2 13c2 5 7 8 13 6-5-1-9-3-13-6z" fill="#5bc0fa" />
          </svg>
          <span className="absolute top-0 left-[14px] h-[15px] w-[17px] overflow-hidden border border-white bg-[#fb0505] pl-[2px] text-[11px] leading-[13px] font-bold text-white">3.7</span>
        </div>
        <svg width="24" height="24" viewBox="0 0 24 24">
          <circle cx="12" cy="12" r="11.500" fill="#adadad" stroke="#e2e2e2" />
          <circle cx="12" cy="9" r="4.500" fill="#fff" />
          <path d="M5 18c1-5 13-5 14 0-3 3-11 3-14 0z" fill="#fff" />
        </svg>
        <button type="button" className="flex items-center gap-[6px] font-bold">
          Nhung
          <Arrow dir="down" />
        </button>
      </div>
    </div>
  );
}

function SideLink({ children }: { children: ReactNode }) {
  return (
    <a href="#" className="flex h-[23px] items-center gap-[6px] pb-px pl-[3px]">
      <DocIcon />
      {children}
    </a>
  );
}

function Sidebar() {
  return (
    <aside className="flex w-[175px] shrink-0 flex-col border border-[#7ea2d1]">
      <div className="flex h-[25px] items-center justify-between border-b border-[#7ea2d1] px-[6px]">
        <h1 className="text-[16px] font-bold">Kho</h1>
        <button type="button" aria-label="Thu gọn">
          <svg width="10" height="8" viewBox="0 0 10 8" fill="none" stroke="#3a66b0"><path d="M4.500 0L1 4l3.500 4M9 0L5.500 4 9 8" /></svg>
        </button>
      </div>
      <div className="flex-1 bg-white">
        {links.map((l) => (
          <SideLink key={l}>{l}</SideLink>
        ))}
        <div className="my-[2px] ml-[2px] border-t border-[#7ea2d1]" />
        {extraLinks.map((l) => (
          <SideLink key={l}>{l}</SideLink>
        ))}
      </div>
      <div className="flex h-[7px] items-center justify-center border-y border-[#7ea2d1]">
        <span className="w-9 border-t-2 border-dotted border-white" />
      </div>
      <nav>
        {modules.map(([icon, name]) => (
          <a
            key={name}
            href="#"
            className={`flex h-8 items-center gap-1 border-b pl-1 font-['DejaVu_Sans_Condensed','Noto_Sans',sans-serif] text-[11px] font-bold ${
              name === "Kho" ? "border-[#f5853a] bg-[#ffe69e]" : "border-[#7ea2d1]"
            }`}
          >
            <svg width="24" height="24" viewBox="0 0 24 24" className="shrink-0">{navIcons[icon]}</svg>
            {name}
          </a>
        ))}
      </nav>
      <div className="flex h-[30px] items-center justify-end gap-1 pr-[3px]">
        {smallIcons.map((icon, i) => (
          <svg key={i} width="16" height="16" viewBox="0 0 16 16">{icon}</svg>
        ))}
        <button type="button" aria-label="Thêm phân hệ" className="ml-1 w-[10px]">
          <svg width="8" height="14" viewBox="0 0 8 14" fill="none" stroke="#000" strokeWidth="1.300">
            <path d="M.5 1l3 2.500-3 2.500M4 1l3 2.500L4 6" />
            <path d="M1 10h6L4 13z" fill="#000" stroke="none" />
          </svg>
        </button>
      </div>
    </aside>
  );
}

function Combo({ width, value, label }: { width: string; value?: string; label: string }) {
  return (
    <div className={`flex h-[21px] border border-[#7ea2d1] bg-white ${width}`}>
      <select aria-label={label} className="w-0 flex-1 appearance-none pl-1">
        <option>{value}</option>
      </select>
      <span className="flex w-[17px] items-center justify-center bg-[#adc6e6]">
        <Arrow dir="down" />
      </span>
    </div>
  );
}

function VoucherGrid() {
  return (
    <section className="border border-r-0 border-[#7ea2d1]">
      <div className="flex">
        <div className="min-w-0 flex-1 overflow-hidden bg-white">
          <table className="w-full table-fixed border-separate border-spacing-0">
            <colgroup>
              <col className="w-[105px]" />
              <col className="w-[105px]" />
              <col className="w-[110px]" />
              <col className="w-[210px]" />
              <col className="w-[120px]" />
              <col className="w-[150px]" />
              <col className="w-[150px]" />
              <col className="w-[142px]" />
              <col className="w-[210px]" />
              <col />
            </colgroup>
            <thead>
              <tr className="h-5">
                <HeadCell label="Ngày hạch toán" pin="on" />
                <HeadCell label="Ngày chứng từ" pin="on" />
                <HeadCell />
                <HeadCell />
                <HeadCell />
                <HeadCell />
                <HeadCell />
                <HeadCell label="Đã lập CT bán hàng" pin="off" />
                <HeadCell label="Loại chứng từ" pin="off" />
                <th className={th}>
                  <div className="pl-[6px] text-left whitespace-nowrap">Trường mở rộng 1</div>
                </th>
              </tr>
            </thead>
            <tbody>
              <tr>
                <FilterCell op="=" label="Lọc ngày hạch toán" />
                <FilterCell op="=" label="Lọc ngày chứng từ" />
                {[3, 4, 5, 6, 7, 8].map((n) => (
                  <td key={n} className={`bg-[#ffffe1] ${dotted}`} />
                ))}
                <FilterCell label="Lọc loại chứng từ" />
                <FilterCell label="Lọc trường mở rộng 1" />
              </tr>
              {vouchers.map(([date, kind], i) => (
                <tr key={i} className="h-5">
                  <td className={`p-0 text-center ${dotted}`}>{date}</td>
                  <td className={`p-0 text-center ${dotted}`}>{date}</td>
                  {[3, 4, 5, 6, 7, 8].map((n) => (
                    <td key={n} className={dotted} />
                  ))}
                  <td className={`p-0 pl-1 whitespace-nowrap ${dotted}`}>{kind}</td>
                  <td className={dotted} />
                </tr>
              ))}
            </tbody>
          </table>
          <div className="mt-px flex h-[18px] border-y border-[#7ea2d1] bg-[#efefef]">
            <div className="w-[105px] border-r border-[#7ea2d1] bg-[#d6d6d6] pl-1 leading-4">Số dòng = 97</div>
          </div>
        </div>
        <div className="flex w-[18px] shrink-0 flex-col items-center border-r border-[#7ea2d1] bg-[#adc6e6]">
          <Arrow dir="up" className="mt-[6px]" />
          <div className="mt-[124px] w-full flex-1 bg-[#d6d6d6]" />
          <div className="flex h-[17px] items-center">
            <Arrow dir="down" />
          </div>
        </div>
      </div>
      <div className="flex h-[17px] bg-[#adc6e6]">
        <div className="flex w-[1053px] items-center pl-[5px]">
          <Arrow dir="left" />
        </div>
        <div className="flex-1 bg-[#d6d6d6]" />
        <div className="flex w-[17px] items-center justify-center">
          <Arrow dir="right" />
        </div>
        <div className="w-[18px] border-r border-[#7ea2d1] bg-[#efefef]" />
      </div>
    </section>
  );
}

function DetailGrid() {
  const solid = "border-r border-b border-r-[#808080] border-b-[#b9b9b9] [border-bottom-style:dotted]";
  return (
    <section className="border border-[#7ea2d1]">
      <div className="overflow-hidden bg-white">
        <table className="w-full table-fixed border-separate border-spacing-0">
          <colgroup>
            <col className="w-[120px]" />
            <col className="w-[210px]" />
            <col className="w-[95px]" />
            <col className="w-[95px]" />
            <col className="w-[95px]" />
            <col className="w-[75px]" />
            <col className="w-[110px]" />
            <col className="w-[114px]" />
            <col className="w-[107px]" />
            <col className="w-[142px]" />
            <col className="w-[110px]" />
            <col className="w-[95px]" />
            <col />
          </colgroup>
          <thead>
            <tr className="h-5">
              <HeadCell label="Mã hàng" pin="on" />
              <HeadCell />
              <HeadCell />
              <HeadCell />
              <HeadCell />
              <HeadCell />
              <HeadCell />
              <HeadCell />
              <HeadCell />
              <th className={th}>
                <div className="flex items-center justify-between pr-[2px] pl-[31px]">
                  Lệnh sản xuất
                  <PinIcon />
                </div>
              </th>
              <HeadCell label="Số lô" pin="off" />
              <HeadCell label="Hạn sử dụng" pin="off" />
              <th className={`${th} overflow-hidden`}>
                <div className="overflow-hidden pl-[11px] text-left whitespace-nowrap">Hàng hóa</div>
              </th>
            </tr>
          </thead>
          <tbody>
            {[0, 1, 2, 3, 4, 5, 6, 7].map((r) => (
              <tr key={r} className={r === 7 ? "h-[19px]" : "h-5"}>
                <td className={`p-0 pl-[6px] ${solid}`}>{r === 0 && "LALALAAAA1"}</td>
                <td className={`p-0 pl-[5px] ${dotted}`}>{r === 0 && "AAA"}</td>
                {[0, 1, 2, 3, 4, 5].map((n) => (
                  <td key={n} className={dotted} />
                ))}
                <td className={`bg-[#e6e6e6] ${dotted}`} />
                {[0, 1, 2, 3].map((n) => (
                  <td key={n} className={dotted} />
                ))}
              </tr>
            ))}
          </tbody>
          <tfoot>
            <tr className="h-[18px] [&>td]:border-y [&>td]:border-[#7ea2d1] [&>td]:bg-[#efefef] [&>td]:p-0">
              <td className="border-r !bg-[#d6d6d6] !pl-1">Số dòng = 1</td>
              <td colSpan={5} className="border-r" />
              <td className="border-r !bg-[#d6d6d6] !pr-1 text-right">1</td>
              <td className="border-r" />
              <td className="border-r !bg-[#d6d6d6] !pr-[3px] text-right">100.000,00</td>
              <td colSpan={4} />
            </tr>
          </tfoot>
        </table>
      </div>
      <div className="flex h-[17px] bg-[#adc6e6]">
        <div className="flex w-[1159px] items-center pl-[5px]">
          <Arrow dir="left" />
        </div>
        <div className="flex-1 bg-[#d6d6d6]" />
        <div className="flex w-[17px] items-center justify-center">
          <Arrow dir="right" />
        </div>
      </div>
    </section>
  );
}

function Workspace() {
  return (
    <main className="flex min-w-0 flex-1 flex-col">
      <div className="flex h-6 items-stretch border-b border-[#7ea2d1]">
        <button type="button" className="-mb-px w-[93px] border border-b-0 border-[#7ea2d1] bg-[#ffe69e] font-bold whitespace-nowrap">Nhập, xuất kho</button>
        <div className="flex flex-1 gap-[17px] pl-2">
          {tabs.map((t) => (
            <button key={t} type="button" className="whitespace-nowrap">{t}</button>
          ))}
        </div>
        <button type="button" aria-label="Tùy chọn" className="mr-[3px] flex w-[37px] items-center gap-[6px] border border-b-0 border-[#7ea2d1] pl-px text-[#1b3f8f]">
          <GearIcon />
          <Arrow dir="down" />
        </button>
      </div>
      <div className="mt-2 mb-[11px] flex h-[21px] items-center pl-[10px]">
        <span className="w-[22px]">Kỳ</span>
        <Combo width="w-[144px]" value="Tùy chọn" label="Kỳ" />
        <span className="w-8 pl-[9px]">Từ</span>
        <Combo width="w-[84px]" label="Từ" />
        <span className="w-9" />
        <Combo width="w-[84px]" label="Đến" />
        <span className="w-[68px]" />
        <Combo width="w-[88px]" label="Trạng thái" />
        <span className="w-10" />
        <Combo width="w-[104px]" label="Loại" />
        <button type="button" aria-label="Lấy dữ liệu" className="ml-2 h-[21px] w-[75px] border border-[#7ea2d1] bg-[#adc6e6]" />
      </div>
      <VoucherGrid />
      <div className="mt-[6px] flex">
        <button type="button" className="h-[19px] w-[61px] border border-b-0 border-[#7ea2d1] bg-[#ffe69e] font-bold">Chi tiết</button>
      </div>
      <DetailGrid />
    </main>
  );
}

function CheckHead({ label }: { label: string }) {
  return (
    <th className={th}>
      <label className="flex flex-col items-center gap-[3px]">
        {label}
        <input type="checkbox" className="size-[13px] appearance-none border border-[#222] bg-white" />
      </label>
    </th>
  );
}

function TemplateDialog() {
  return (
    <div role="dialog" aria-label="Sửa mẫu" className="w-[860px] border border-[#6595c8] bg-[#cbdbf1] shadow-[1px_1px_4px_rgba(0,0,0,0.4)]">
      <div className="flex h-[29px] items-center bg-[#6595c8] pr-[6px] pl-[2px] text-white">
        <span className={`flex-1 text-[11px] ${ui}`}>Sửa mẫu</span>
        <div className="flex items-center gap-[11px]">
          <svg width="7" height="10" viewBox="0 0 7 10"><path d="M0 5h7" stroke="#555" strokeWidth="2" /></svg>
          <button type="button" aria-label="Phóng to">
            <svg width="11" height="10" viewBox="0 0 11 10" fill="none" stroke="#000"><path d="M.5 1.500h10v8H.5zM0 1h11M0 2h11" /></svg>
          </button>
          <button type="button" aria-label="Đóng">
            <svg width="10" height="10" viewBox="0 0 10 10"><path d="M2 2l6 6M8 2L2 8" stroke="#000" strokeWidth="2" /></svg>
          </button>
        </div>
      </div>
      <div className="px-[11px] pt-[10px]">
        <button type="button" className="block h-[19px] w-[103px] border border-b-0 border-[#7ea2d1] bg-[#ffe69e] font-bold">Nhập, xuất kho</button>
        <div className="flex gap-2">
          <div className="flex min-w-0 flex-1 border border-t-2 border-b-2 border-[#7ea2d1] bg-[#adc6e6]">
            <div className="min-w-0 flex-1">
              <div className="h-[526px] overflow-hidden bg-white">
                <table className="w-full table-fixed border-separate border-spacing-0">
                  <colgroup>
                    <col className="w-[31px]" />
                    <col className="w-[119px]" />
                    <col className="w-[165px]" />
                    <col className="w-[174px]" />
                    <col className="w-[100px]" />
                    <col className="w-[100px]" />
                    <col />
                  </colgroup>
                  <thead>
                    <tr className="h-[39px]">
                      <th colSpan={2} className={th}>Tên cột dữ liệu</th>
                      <th className={th}>Tên cột trên giao diện</th>
                      <th className={th}>Ghi chú</th>
                      <CheckHead label="Hiển thị" />
                      <CheckHead label="Cố định cột" />
                      <th className={th}>Độ rộng</th>
                    </tr>
                  </thead>
                  <tbody>
                    <tr>
                      <td className="border-b border-[#7ea2d1] bg-[#adc6e6] p-0">
                        <FilterOffIcon />
                      </td>
                      <FilterCell label="Lọc tên cột dữ liệu" className="bg-[#e6e6e6]" />
                      <FilterCell label="Lọc tên cột trên giao diện" />
                      <FilterCell label="Lọc ghi chú" />
                      <FilterCell label="Lọc hiển thị" tick />
                      <FilterCell label="Lọc cố định cột" tick />
                      <FilterCell op="≤" label="Lọc độ rộng" />
                    </tr>
                    {fields.map((f) => (
                      <tr key={f.name} className="h-5">
                        <td className="border-b border-[#7ea2d1] bg-[#efefef] p-0" />
                        <td className={`truncate bg-[#e6e6e6] p-0 pl-1 ${dotted}`}>{f.name}</td>
                        <td className={`truncate p-0 pl-1 ${dotted}`}>{f.name}</td>
                        <td className={`truncate p-0 pl-1 ${dotted}`}>{f.note}</td>
                        <td className={`p-0 text-center leading-none ${dotted}`}>
                          <Tick on={f.show} label={`Hiển thị ${f.name}`} />
                        </td>
                        <td className={`p-0 text-center leading-none ${dotted}`}>
                          <Tick on={f.fixed} label={`Cố định ${f.name}`} />
                        </td>
                        <td className={`p-0 pr-px text-right ${dotted}`}>{f.width}</td>
                      </tr>
                    ))}
                  </tbody>
                </table>
              </div>
              <div className="flex h-4 border-t border-r border-[#7ea2d1] bg-[#efefef]">
                <div className="w-[150px] border-r border-[#7ea2d1] bg-[#d6d6d6] pl-[3px] leading-[15px]">Số dòng = 32</div>
              </div>
            </div>
            <div className="flex w-[18px] shrink-0 flex-col items-center">
              <Arrow dir="up" className="mt-[6px]" />
              <div className="mt-[364px] w-full flex-1 bg-[#d6d6d6]" />
              <div className="flex h-[17px] items-center">
                <Arrow dir="down" />
              </div>
            </div>
          </div>
          <div className="flex w-[26px] flex-col gap-2">
            <button type="button" aria-label="Lên" className="flex h-[25px] items-center justify-center border border-[#7ea2d1] bg-[#adc6e6]">
              <GreenArrow />
            </button>
            <button type="button" aria-label="Xuống" className="flex h-[25px] items-center justify-center border border-[#7ea2d1] bg-[#adc6e6]">
              <GreenArrow down />
            </button>
          </div>
        </div>
        <div className="flex items-center gap-[7px] pt-[7px]">
          <DialogButton icon={<HelpIcon />}>Giúp</DialogButton>
          <span className="flex-1" />
          <DialogButton wide icon={<RulerIcon />}>Lấy mẫu ngầm định</DialogButton>
          <DialogButton icon={<SaveIcon />}>Cất</DialogButton>
          <DialogButton icon={<CancelIcon />}>Hủy bỏ</DialogButton>
        </div>
      </div>
      <div className="flex h-[9px] justify-end">
        <svg width="10" height="9" viewBox="0 0 10 9" fill="#b3b7bf">
          <path d="M6 0h2v2H6zM3 3h2v2H3zM6 3h2v2H6zM0 6h2v2H0zM3 6h2v2H3zM6 6h2v2H6z" />
        </svg>
      </div>
    </div>
  );
}

export default function App() {
  return (
    <div className="relative flex min-h-screen flex-col overflow-hidden bg-[#cbdbf1] font-['Liberation_Sans',Arial,sans-serif] text-[11px] leading-[14px] text-black">
      <TitleBar />
      <TopBars />
      <div className="flex flex-1 gap-[3px] pt-[3px] pb-[3px] pl-[3px]">
        <Sidebar />
        <Workspace />
      </div>
      <div className="absolute inset-x-0 top-[107px] flex justify-center">
        <TemplateDialog />
      </div>
    </div>
  );
}
